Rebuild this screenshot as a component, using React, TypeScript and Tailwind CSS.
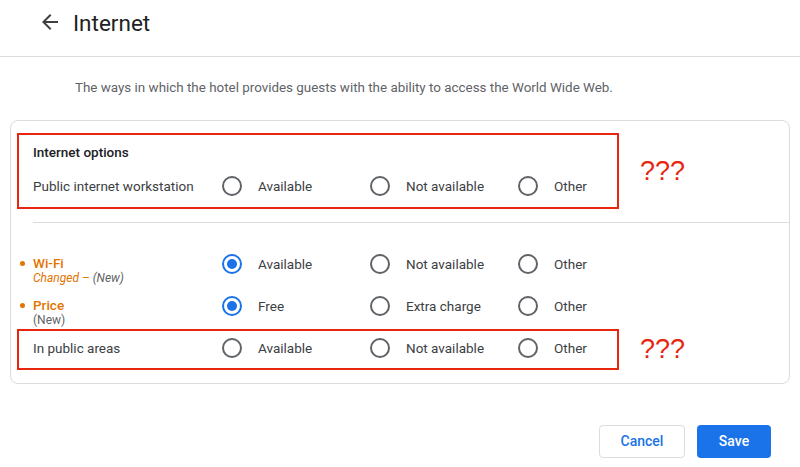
import React from "react";

const font = { fontFamily: "Roboto, 'Noto Sans', Arial, sans-serif" };

function Radio({ checked }: { checked?: boolean }) {
  return checked ? (
    <span className="flex h-[20px] w-[20px] shrink-0 items-center justify-center rounded-full border-2 border-[#1a73e8]">
      <span className="h-[10px] w-[10px] rounded-full bg-[#1a73e8]" />
    </span>
  ) : (
    <span className="h-[20px] w-[20px] shrink-0 rounded-full border-2 border-[#5f6368]" />
  );
}

function Options({ items, checked }: { items: string[]; checked?: number }) {
  return (
    <div className="flex">
      {items.map((t, i) => (
        <div key={t} className={i < items.length - 1 ? "flex w-[148px] shrink-0 items-center" : "flex shrink-0 items-center"}>
          <Radio checked={checked === i} />
          <span className="ml-[16px] whitespace-nowrap text-[13.5px] leading-[18px] text-[#3c4043]">{t}</span>
        </div>
      ))}
    </div>
  );
}

const std = ["Available", "Not available", "Other"];

function Marks() {
  return (
    <span
      className="ml-[21px] text-[27px] leading-none text-[#e8260f]"
      style={{ fontFamily: "'Liberation Sans', Arial, sans-serif" }}
    >
      ???
    </span>
  );
}

export default function App() {
  return (
    <div className="h-[467px] w-[800px] overflow-hidden bg-white" style={font}>
      <header className="flex h-[57px] items-start border-b border-[#dadce0] pl-[38px] pt-[9px]">
        <svg width="24" height="24" viewBox="0 0 24 24" className="mt-[1px] text-[#3c4043]">
          <path fill="currentColor" d="M20 11H7.83l5.59-5.59L12 4l-8 8 8 8 1.41-1.41L7.83 13H20v-2z" />
        </svg>
        <h1 className="ml-[11px] text-[22.5px] leading-[28px] text-[#202124]">Internet</h1>
      </header>

      <p className="ml-[75px] mt-[22px] whitespace-nowrap text-[13.4px] leading-[18px] text-[#5f6368]">
        The ways in which the hotel provides guests with the ability to access the World Wide Web.
      </p>

      <div className="ml-[10px] mt-[23px] w-[780px] rounded-[8px] border border-[#dadce0] pb-[13px] pt-[12px]">
        <div className="ml-[6px] flex items-center">
          <div className="w-[602px] border-2 border-[#e8260f] pb-[7px] pl-[14px] pt-[8px]">
            <div className="text-[13.5px] font-medium leading-[18px] text-[#202124]">Internet options</div>
            <div className="mt-[11px] flex h-[28px] items-center">
              <div className="w-[189px] shrink-0 whitespace-nowrap text-[13.5px] leading-[18px] text-[#3c4043]">
                Public internet workstation
              </div>
              <Options items={std} />
            </div>
          </div>
          <Marks />
        </div>

        <div className="ml-[22px] mt-[13px] h-px bg-[#dadce0]" />

        <div className="ml-[22px] mt-[31px] flex h-[42px] items-start">
          <div className="relative w-[189px] shrink-0">
            <span className="absolute left-[-13px] top-[7px] h-[5px] w-[5px] rounded-full bg-[#e37400]" />
            <div className="text-[13.5px] font-medium leading-[18px] text-[#e37400]">Wi-Fi</div>
            <div className="whitespace-nowrap text-[12px] italic leading-[13px]">
              <span className="text-[#e37400]">Changed – </span>
              <span className="text-[#5f6368]">(New)</span>
            </div>
          </div>
          <Options items={std} checked={0} />
        </div>

        <div className="ml-[22px] flex h-[33px] items-start">
          <div className="relative w-[189px] shrink-0">
            <span className="absolute left-[-13px] top-[7px] h-[5px] w-[5px] rounded-full bg-[#e37400]" />
            <div className="text-[13.5px] font-medium leading-[18px] text-[#e37400]">Price</div>
            <div className="text-[12px] leading-[13px] text-[#5f6368]">(New)</div>
          </div>
          <Options items={["Free", "Extra charge", "Other"]} checked={0} />
        </div>

        <div className="ml-[6px] flex items-center">
          <div className="flex h-[41px] w-[602px] items-start border-2 border-[#e8260f] pl-[14px] pt-[7px]">
            <div className="flex h-[20px] w-[189px] shrink-0 items-center text-[13.5px] leading-[18px] text-[#3c4043]">
              In public areas
            </div>
            <Options items={std} />
          </div>
          <Marks />
        </div>
      </div>

      <div className="mr-[29px] mt-[41px] flex justify-end gap-[12px]">
        <button className="h-[33px] w-[86px] rounded-[4px] border border-[#dadce0] bg-white text-[14px] font-medium text-[#1a73e8]">
          Cancel
        </button>
        <button className="h-[33px] w-[74px] rounded-[4px] bg-[#1a73e8] text-[14px] font-medium text-white">
          Save
        </button>
      </div>
    </div>
  );
}
